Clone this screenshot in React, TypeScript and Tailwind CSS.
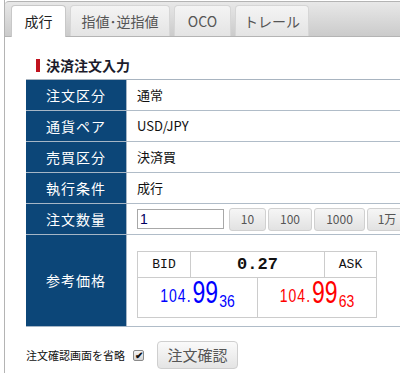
import React from 'react';

const jp = '[font-family:"Noto_Sans_CJK_JP","Liberation_Sans",sans-serif]';

const rows: { label: string; value: string }[] = [
    { label: '注文区分', value: '通常' },
    { label: '通貨ペア', value: 'USD/JPY' },
    { label: '売買区分', value: '決済買' },
    { label: '執行条件', value: '成行' },
];

const Tab: React.FC<{ title: string; active?: boolean; w: string }> = ({ title, active, w }) => (
    <div
        className={`${w} h-[31px] flex items-center justify-center rounded-t-[4px] border border-b-0 text-[14px] ${
            active
                ? 'bg-white border-[#c8c8c8] text-[#222] relative top-[1px] h-[32px]'
                : 'bg-gradient-to-b from-[#f4f4f4] to-[#e4e4e4] border-[#d6d6d6] text-[#555]'
        }`}
    >
        {title}
    </div>
);

const QtyButton: React.FC<{ title: string; w: string }> = ({ title, w }) => (
    <button className={`${w} h-[23px] shrink-0 rounded-[3px] border border-[#d0d0d0] bg-gradient-to-b from-[#f6f6f6] to-[#e2e2e2] text-[12px] text-[#555]`}>
        {title}
    </button>
);

const Price: React.FC<{ big: string; small: string; color: string }> = ({ big, small, color }) => (
    <div className={`flex items-end justify-center h-full pb-[8px] ${color}`}>
        <span className="inline-block text-[14px] leading-none tracking-[1px] scale-y-[1.25] origin-bottom mb-[5px]">104.</span>
        <span className="inline-block text-[23px] leading-none ml-[1px] scale-y-[1.4] origin-bottom">{big}</span>
        <span className="inline-block text-[14px] leading-none ml-[1px] scale-y-[1.2] origin-bottom">{small}</span>
    </div>
);

const App: React.FC = () => {
    return (
        <div className={`w-[400px] h-[373px] overflow-hidden bg-white ${jp}`}>
            <div className="ml-[4px] h-full border-l border-[#b4b4b4] pt-[1px]">
                {/* Tabs */}
                <div className="h-[36px] border-t border-b border-[#b4b4b4] rounded-tl-[4px] bg-gradient-to-b from-[#e8e8e8] to-[#cbcbcb] flex items-end gap-[4px] pl-[6px]">
                    <Tab title="成行" active w="w-[55px]" />
                    <Tab title="指値･逆指値" w="w-[100px]" />
                    <Tab title="OCO" w="w-[57px]" />
                    <Tab title="トレール" w="w-[74px]" />
                </div>

                <div className="pl-[21px]">
                    {/* Heading */}
                    <div className="h-[43px] flex items-end pb-[3px] border-b border-[#a8b4c0]">
                        <div className="flex items-center ml-[10px]">
                            <span className="w-[4px] h-[13px] bg-[#c0121e]" />
                            <span className="ml-[6px] text-[14px] font-bold text-[#1c1c2c]">決済注文入力</span>
                        </div>
                    </div>

                    {/* Table */}
                    <div className="w-[400px]">
                        {rows.map((r) => (
                            <div key={r.label} className="flex h-[31px]">
                                <div className="w-[101px] shrink-0 bg-[#0c4678] border-r border-b border-[#a6b6c6] flex items-center justify-center text-white text-[14px] tracking-[1px]">
                                    {r.label}
                                </div>
                                <div className="flex-1 border-b border-[#b0bcc8] flex items-center pl-[10px] text-[13px] text-[#111]">
                                    {r.value}
                                </div>
                            </div>
                        ))}
                        <div className="flex h-[31px]">
                            <div className="w-[101px] shrink-0 bg-[#0c4678] border-r border-b border-[#a6b6c6] flex items-center justify-center text-white text-[14px] tracking-[1px]">
                                注文数量
                            </div>
                            <div className="flex-1 border-b border-[#b0bcc8] flex items-center pl-[10px] gap-[2px]">
                                <div className="w-[87px] h-[20px] border border-[#a8a8a8] flex items-center pl-[2px] text-[14px] text-[#000060] mr-[3px] [font-family:'Liberation_Sans',sans-serif]">
                                    1
                                </div>
                                <QtyButton title="10" w="w-[37px]" />
                                <QtyButton title="100" w="w-[44px]" />
                                <QtyButton title="1000" w="w-[51px]" />
                                <QtyButton title="1万" w="w-[40px]" />
                            </div>
                        </div>
                        <div className="flex h-[92px]">
                            <div className="w-[101px] shrink-0 bg-[#0c4678] border-r border-b border-[#a6b6c6] flex items-center justify-center text-white text-[14px] tracking-[1px]">
                                参考価格
                            </div>
                            <div className="flex-1 border-b border-[#b0bcc8] pl-[10px] pt-[16px]">
                                <div className="w-[240px] border border-[#cccccc] [font-family:'Liberation_Mono',monospace]">
                                    <div className="flex h-[26px] border-b border-[#cccccc] text-[13px] text-[#111]">
                                        <div className="w-[53px] border-r border-[#cccccc] flex items-center justify-center">BID</div>
                                        <div className="flex-1 border-r border-[#cccccc] flex items-center justify-center text-[17px] font-bold">0.27</div>
                                        <div className="w-[51px] flex items-center justify-center">ASK</div>
                                    </div>
                                    <div className="flex h-[39px] [font-family:'Liberation_Sans',sans-serif]">
                                        <div className="w-[120px] border-r border-[#cccccc]">
                                            <Price big="99" small="36" color="text-[#0000ff]" />
                                        </div>
                                        <div className="flex-1">
                                            <Price big="99" small="63" color="text-[#ff0000]" />
                                        </div>
                                    </div>
                                </div>
                            </div>
                        </div>
                    </div>

                    {/* Confirm row */}
                    <div className="flex items-center h-[42px] pt-[14px]">
                        <span className="text-[11px] text-[#111] w-[107px]">注文確認画面を省略</span>
                        <span className="w-[11px] h-[11px] rounded-[2px] border border-[#8a8a8a] bg-gradient-to-b from-[#f4f4f4] to-[#d4d4d4] flex items-center justify-center text-[10px] text-[#111] leading-none font-bold">
                            ✔
                        </span>
                        <button className="ml-[13px] w-[81px] h-[28px] rounded-[4px] border border-[#cfcfcf] bg-gradient-to-b from-[#fafafa] to-[#e4e4e4] text-[15px] text-[#555]">
                            注文確認
                        </button>
                    </div>
                </div>
            </div>
        </div>
    );
};

export default App;
